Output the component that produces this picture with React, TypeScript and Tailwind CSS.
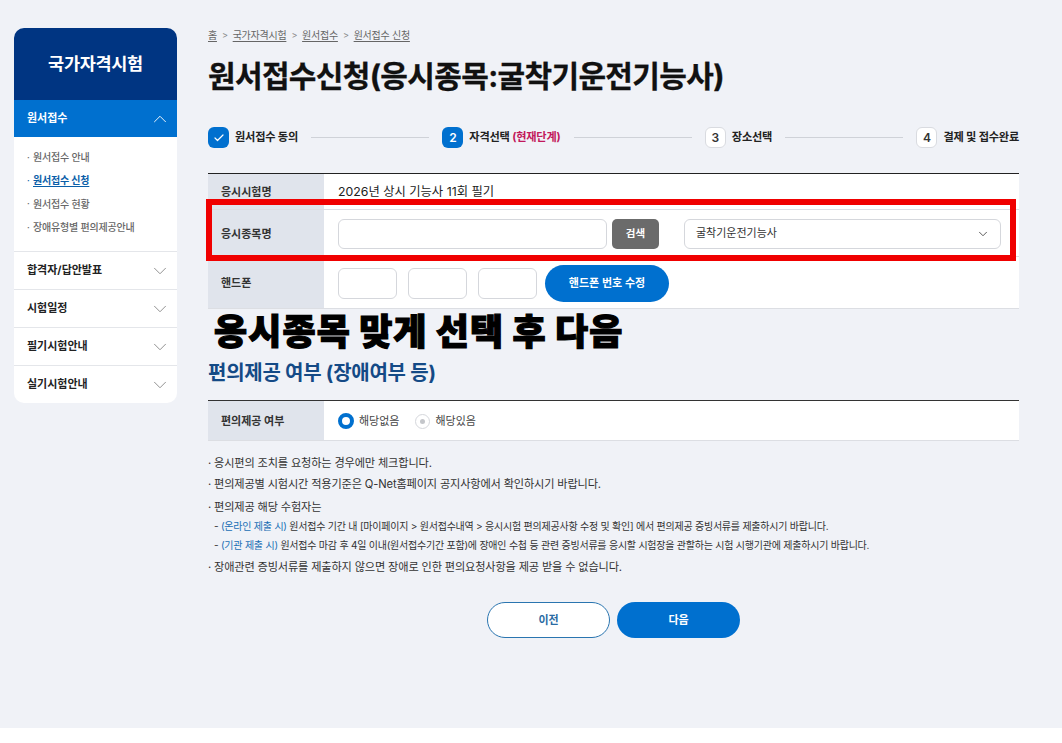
import React from "react";
import { ChevronDown, ChevronUp, Check } from "lucide-react";

const FONT = "font-['Inter','Noto_Sans_CJK_KR',sans-serif]";

const closedMenus = ["합격자/답안발표", "시험일정", "필기시험안내", "실기시험안내"];
const subMenus = [
  { label: "원서접수 안내" },
  { label: "원서접수 신청", active: true },
  { label: "원서접수 현황" },
  { label: "장애유형별 편의제공안내" },
];

function Sidebar() {
  return (
    <aside className="w-[163px] shrink-0 mt-[28px] self-start rounded-[10px] bg-white overflow-hidden">
      <div className="h-[72px] bg-[#003582] flex items-center justify-center text-white text-[17.5px] font-bold tracking-[-0.3px]">국가자격시험</div>
      <div className="h-[37px] bg-[#0070cf] flex items-center justify-between pl-[13px] pr-[6px] text-white text-[11px] font-bold">
        <span>원서접수</span>
        <ChevronUp size={22} strokeWidth={1} />
      </div>
      <ul className="h-[115px] pt-[9px] pl-[13px] border-b border-[#e4e6ea]">
        {subMenus.map((m) => (
          <li key={m.label} className={`h-[23.3px] flex items-center text-[10px] font-medium tracking-[-0.2px] ${m.active ? "text-[#0a5ea8]" : "text-[#666]"}`}>
            <span className="w-[6px] text-[9px]">·</span>
            <span className={m.active ? "underline underline-offset-2 font-semibold" : ""}>{m.label}</span>
          </li>
        ))}
      </ul>
      {closedMenus.map((m, i) => (
        <div key={m} className={`flex items-center justify-between pl-[13px] pr-[6px] text-[11px] font-bold text-[#222] ${i < 3 ? "h-[38px] border-b border-[#e4e6ea]" : "h-[37px]"}`}>
          <span>{m}</span>
          <ChevronDown size={22} strokeWidth={1} className="text-[#888]" />
        </div>
      ))}
    </aside>
  );
}

function Breadcrumb() {
  const items = ["홈", "국가자격시험", "원서접수", "원서접수 신청"];
  return (
    <div className="h-[14px] mt-[28px] flex items-center text-[10px] text-[#666] tracking-[-0.25px]">
      {items.map((t, i) => (
        <React.Fragment key={t}>
          {i > 0 && <span className="mx-[5px] text-[9px] text-[#888]">&gt;</span>}
          <span className="underline underline-offset-2">{t}</span>
        </React.Fragment>
      ))}
    </div>
  );
}

function Badge({ children, on }: { children: React.ReactNode; on?: boolean }) {
  return (
    <span className={`w-[21px] h-[21px] shrink-0 rounded-[6px] flex items-center justify-center text-[12px] font-semibold ${on ? "bg-[#0070cf] text-white" : "bg-white border border-[#d9dbe0] text-[#333] font-normal"}`}>
      {children}
    </span>
  );
}

function Steps() {
  const line = <div className="flex-1 h-px bg-[#cfd2d8] mx-[13px]" />;
  return (
    <div className="h-[21px] mt-[29px] flex items-center text-[11.2px] font-bold text-[#222] tracking-[-0.2px]">
      <Badge on><Check size={12} strokeWidth={2.4} /></Badge>
      <span className="ml-[6px]">원서접수 동의</span>
      {line}
      <Badge on>2</Badge>
      <span className="ml-[6px]">자격선택 <span className="text-[#c2185b]">(현재단계)</span></span>
      {line}
      <Badge>3</Badge>
      <span className="ml-[6px]">장소선택</span>
      {line}
      <Badge>4</Badge>
      <span className="ml-[6px]">결제 및 접수완료</span>
    </div>
  );
}

function Row({ label, h, children, last }: { label: string; h: string; children: React.ReactNode; last?: boolean }) {
  return (
    <div className={`flex ${h} ${last ? "" : "border-b border-[#dcdee3]"}`}>
      <div className="w-[116px] shrink-0 bg-[#e0e4ec] pl-[13px] pt-[2px] flex items-center text-[11px] font-bold text-[#333]">{label}</div>
      <div className="flex-1 bg-white pl-[14px] pt-[1px] flex items-center">{children}</div>
    </div>
  );
}

function PhoneBox() {
  return <div className="w-[59px] h-[31px] rounded-[6px] bg-white border border-[#d5d7dc]" />;
}

function Notes() {
  const base = "text-[11.2px] text-[#333] tracking-[-0.16px] leading-[16px]";
  const sub = "text-[10px] text-[#333] tracking-[-0.23px] leading-[14px] pl-[6px]";
  return (
    <div className="mt-[14px]">
      <p className={base}>· 응시편의 조치를 요청하는 경우에만 체크합니다.</p>
      <p className={`${base} mt-[5px]`}>· 편의제공별 시험시간 적용기준은 Q-Net홈페이지 공지사항에서 확인하시기 바랍니다.</p>
      <p className={`${base} mt-[7px]`}>· 편의제공 해당 수험자는</p>
      <p className={`${sub} mt-[4px]`}>- <span className="text-[#1a6fb5]">(온라인 제출 시)</span> 원서접수 기간 내 [마이페이지 &gt; 원서접수내역 &gt; 응시시험 편의제공사항 수정 및 확인] 에서 편의제공 증빙서류를 제출하시기 바랍니다.</p>
      <p className={`${sub} mt-[5px]`}>- <span className="text-[#1a6fb5]">(기관 제출 시)</span> 원서접수 마감 후 4일 이내(원서접수기간 포함)에 장애인 수첩 등 관련 증빙서류를 응시할 시험장을 관할하는 시험 시행기관에 제출하시기 바랍니다.</p>
      <p className={`${base} mt-[7px]`}>· 장애관련 증빙서류를 제출하지 않으면 장애로 인한 편의요청사항을 제공 받을 수 없습니다.</p>
    </div>
  );
}

export default function App() {
  return (
    <div className={`${FONT} min-h-[743px] bg-white`}>
      <div className="h-[728px] bg-[#f0f2f7] flex pl-[14px]">
        <Sidebar />
        <main className="w-[811px] ml-[31px]">
          <Breadcrumb />
          <h1 className="mt-[12px] h-[44px] leading-[44px] text-[30px] font-bold text-[#111] tracking-[-0.65px] [-webkit-text-stroke:0.3px_#111]">원서접수신청(응시종목:굴착기운전기능사)</h1>
          <Steps />

          <div className="relative mt-[25px] border-t border-[#222]">
            <Row label="응시시험명" h="h-[36px]">
              <span className="text-[12.3px] text-[#222] pt-[1px]">2026년 상시 기능사 11회 필기</span>
            </Row>
            <Row label="응시종목명" h="h-[47px]">
              <div className="w-[269px] h-[30px] rounded-[6px] bg-white border border-[#d5d7dc]" />
              <button className="ml-[5px] w-[47px] h-[30px] rounded-[5px] bg-[#6b6b6b] text-white text-[10.5px] font-semibold">검색</button>
              <div className="ml-[25px] w-[317px] h-[30px] rounded-[6px] bg-white border border-[#d5d7dc] flex items-center justify-between pl-[11px] pr-[10px] text-[11px] text-[#333]">
                <span>굴착기운전기능사</span>
                <ChevronDown size={14} strokeWidth={1.5} className="text-[#444]" />
              </div>
            </Row>
            <Row label="핸드폰" h="h-[52px]">
              <div className="flex items-center gap-[11px]">
                <PhoneBox />
                <PhoneBox />
                <PhoneBox />
              </div>
              <button className="ml-[8px] w-[124px] h-[37px] rounded-full bg-[#0070cf] text-white text-[11px] font-semibold">핸드폰 번호 수정</button>
            </Row>
            <div className="absolute left-[-2px] top-[25px] w-[810px] h-[62px] border-[6px] border-[#f00000]" />
          </div>

          <div className="h-[44px] pl-[6px] pt-[1px] flex items-center text-[36px] leading-none font-black text-black tracking-[1.1px] [-webkit-text-stroke:1.2px_#000]">응시종목 맞게 선택 후 다음</div>
          <h2 className="mt-[8px] h-[24px] leading-[24px] text-[20px] font-bold text-[#144a86] tracking-[-0.25px]">편의제공 여부 (장애여부 등)</h2>

          <div className="mt-[15px] border-t border-[#333]">
            <Row label="편의제공 여부" h="h-[40px]">
              <span className="w-[16px] h-[16px] rounded-full border-[4px] border-[#0070cf] bg-white" />
              <span className="ml-[5px] text-[11px] text-[#444]">해당없음</span>
              <span className="ml-[16px] w-[15px] h-[15px] rounded-full border border-[#d5d7dc] bg-white flex items-center justify-center">
                <span className="w-[5px] h-[5px] rounded-full bg-[#c4c6ca]" />
              </span>
              <span className="ml-[5px] text-[11px] text-[#444]">해당있음</span>
            </Row>
          </div>

          <Notes />

          <div className="mt-[27px] flex justify-center gap-[7px]">
            <button className="w-[123px] h-[36px] rounded-full bg-white border border-[#2a75b0] text-[#2a6ba3] text-[11px] font-semibold">이전</button>
            <button className="w-[123px] h-[36px] rounded-full bg-[#0070cf] text-white text-[11px] font-semibold">다음</button>
          </div>
        </main>
      </div>
    </div>
  );
}
